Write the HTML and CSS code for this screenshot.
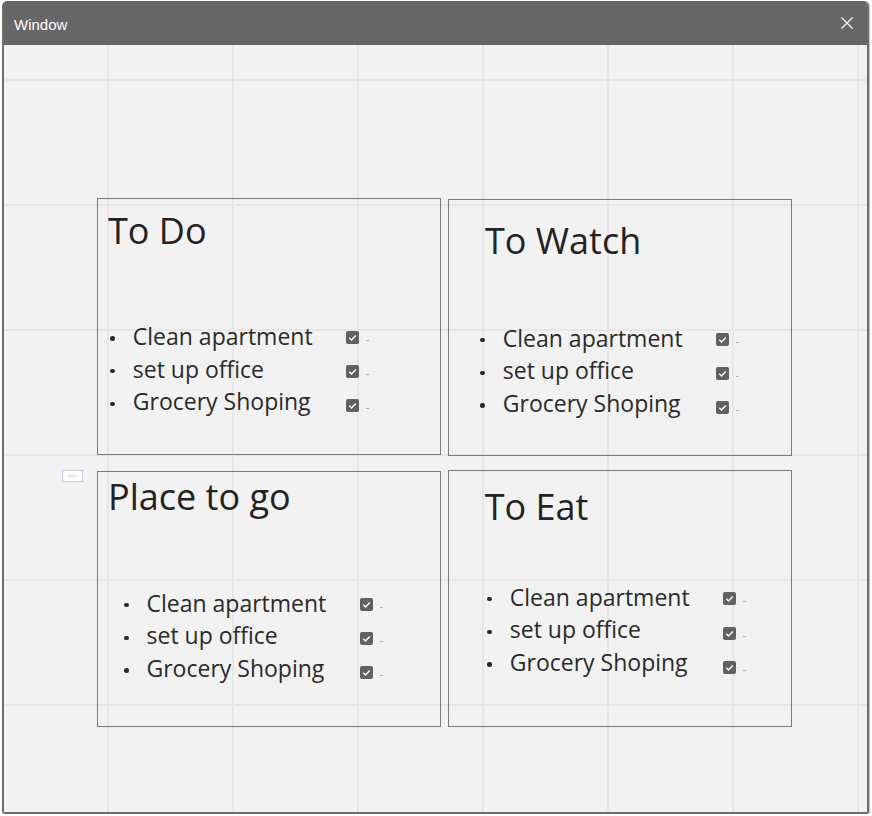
FILE: index.html
```html
<!DOCTYPE html>
<html lang="en">
<head>
<meta charset="utf-8">
<title>Window</title>
<link rel="stylesheet" href="styles.css">
</head>
<body>
<div class="window">
  <div class="titlebar">
    <span class="title">Window</span>
    <svg class="close" width="12" height="12" viewBox="0 0 12 12" aria-hidden="true">
      <path d="M0.5 0.5 L11.5 11.5 M11.5 0.5 L0.5 11.5" stroke="#ffffff" stroke-width="1.2" fill="none"/>
    </svg>
  </div>
  <div class="canvas">
    <div class="tiny-button">Button</div>
    <div class="board">
      <section class="card card-todo">
        <h2 class="card-title">To Do</h2>
        <div class="items">
          <ul class="labels">
            <li class="item"><span class="bullet"></span><span class="label">Clean apartment</span></li>
            <li class="item"><span class="bullet"></span><span class="label">set up office</span></li>
            <li class="item"><span class="bullet"></span><span class="label">Grocery Shoping</span></li>
          </ul>
          <div class="checks">
            <div class="check-row"><span class="check"><svg width="13" height="13" viewBox="0 0 13 13"><path d="M3.3 6.8 L5.5 8.9 L9.8 4.4" stroke="#fff" stroke-width="1.4" fill="none"/></svg></span><span class="dash"></span></div>
            <div class="check-row"><span class="check"><svg width="13" height="13" viewBox="0 0 13 13"><path d="M3.3 6.8 L5.5 8.9 L9.8 4.4" stroke="#fff" stroke-width="1.4" fill="none"/></svg></span><span class="dash"></span></div>
            <div class="check-row"><span class="check"><svg width="13" height="13" viewBox="0 0 13 13"><path d="M3.3 6.8 L5.5 8.9 L9.8 4.4" stroke="#fff" stroke-width="1.4" fill="none"/></svg></span><span class="dash"></span></div>
          </div>
        </div>
      </section>
      <section class="card card-watch">
        <h2 class="card-title">To Watch</h2>
        <div class="items">
          <ul class="labels">
            <li class="item"><span class="bullet"></span><span class="label">Clean apartment</span></li>
            <li class="item"><span class="bullet"></span><span class="label">set up office</span></li>
            <li class="item"><span class="bullet"></span><span class="label">Grocery Shoping</span></li>
          </ul>
          <div class="checks">
            <div class="check-row"><span class="check"><svg width="13" height="13" viewBox="0 0 13 13"><path d="M3.3 6.8 L5.5 8.9 L9.8 4.4" stroke="#fff" stroke-width="1.4" fill="none"/></svg></span><span class="dash"></span></div>
            <div class="check-row"><span class="check"><svg width="13" height="13" viewBox="0 0 13 13"><path d="M3.3 6.8 L5.5 8.9 L9.8 4.4" stroke="#fff" stroke-width="1.4" fill="none"/></svg></span><span class="dash"></span></div>
            <div class="check-row"><span class="check"><svg width="13" height="13" viewBox="0 0 13 13"><path d="M3.3 6.8 L5.5 8.9 L9.8 4.4" stroke="#fff" stroke-width="1.4" fill="none"/></svg></span><span class="dash"></span></div>
          </div>
        </div>
      </section>
      <section class="card card-place">
        <h2 class="card-title">Place to go</h2>
        <div class="items">
          <ul class="labels">
            <li class="item"><span class="bullet"></span><span class="label">Clean apartment</span></li>
            <li class="item"><span class="bullet"></span><span class="label">set up office</span></li>
            <li class="item"><span class="bullet"></span><span class="label">Grocery Shoping</span></li>
          </ul>
          <div class="checks">
            <div class="check-row"><span class="check"><svg width="13" height="13" viewBox="0 0 13 13"><path d="M3.3 6.8 L5.5 8.9 L9.8 4.4" stroke="#fff" stroke-width="1.4" fill="none"/></svg></span><span class="dash"></span></div>
            <div class="check-row"><span class="check"><svg width="13" height="13" viewBox="0 0 13 13"><path d="M3.3 6.8 L5.5 8.9 L9.8 4.4" stroke="#fff" stroke-width="1.4" fill="none"/></svg></span><span class="dash"></span></div>
            <div class="check-row"><span class="check"><svg width="13" height="13" viewBox="0 0 13 13"><path d="M3.3 6.8 L5.5 8.9 L9.8 4.4" stroke="#fff" stroke-width="1.4" fill="none"/></svg></span><span class="dash"></span></div>
          </div>
        </div>
      </section>
      <section class="card card-eat">
        <h2 class="card-title">To Eat</h2>
        <div class="items">
          <ul class="labels">
            <li class="item"><span class="bullet"></span><span class="label">Clean apartment</span></li>
            <li class="item"><span class="bullet"></span><span class="label">set up office</span></li>
            <li class="item"><span class="bullet"></span><span class="label">Grocery Shoping</span></li>
          </ul>
          <div class="checks">
            <div class="check-row"><span class="check"><svg width="13" height="13" viewBox="0 0 13 13"><path d="M3.3 6.8 L5.5 8.9 L9.8 4.4" stroke="#fff" stroke-width="1.4" fill="none"/></svg></span><span class="dash"></span></div>
            <div class="check-row"><span class="check"><svg width="13" height="13" viewBox="0 0 13 13"><path d="M3.3 6.8 L5.5 8.9 L9.8 4.4" stroke="#fff" stroke-width="1.4" fill="none"/></svg></span><span class="dash"></span></div>
            <div class="check-row"><span class="check"><svg width="13" height="13" viewBox="0 0 13 13"><path d="M3.3 6.8 L5.5 8.9 L9.8 4.4" stroke="#fff" stroke-width="1.4" fill="none"/></svg></span><span class="dash"></span></div>
          </div>
        </div>
      </section>
    </div>
  </div>
</div>
</body>
</html>
```

FILE: styles.css
```css
* {
  box-sizing: border-box;
}

html, body {
  margin: 0;
  padding: 0;
  background: #ffffff;
}

body {
  font-family: "Open Sans", "DejaVu Sans", sans-serif;
  color: #222222;
}

.window {
  margin: 1px 0 0 2px;
  width: 867px;
  height: 813px;
  border: 2px solid #6e6e6e;
  border-top: none;
  border-radius: 5px 5px 3px 3px;
  overflow: hidden;
  display: flex;
  flex-direction: column;
  background: #f2f2f2;
  box-shadow: 1px 1px 1px rgba(0, 0, 0, 0.25);
}

.titlebar {
  flex: 0 0 44px;
  margin: 0 -2px;
  background: #666666;
  display: flex;
  align-items: center;
  justify-content: space-between;
  padding: 3px 16px 0 12px;
}

.title {
  font-family: "Liberation Sans", Arial, sans-serif;
  font-size: 15px;
  color: #ffffff;
}

.close {
  display: block;
  margin-top: -3px;
}

.canvas {
  position: relative;
  flex: 1 1 auto;
  padding: 153px 0 0 93px;
  background-color: #f2f2f2;
  background-image:
    linear-gradient(to right, #e6e6e6 0, #e6e6e6 2px, transparent 2px),
    linear-gradient(to bottom, #e6e6e6 0, #e6e6e6 2px, transparent 2px);
  background-size: 125px 125px;
  background-position: 103px 34px;
}

.tiny-button {
  position: absolute;
  left: 58px;
  top: 425px;
  width: 21px;
  height: 12px;
  border: 1px solid #c9c9ef;
  background: #ffffff;
  font-family: "Liberation Sans", Arial, sans-serif;
  font-size: 3px;
  line-height: 10px;
  text-align: center;
  color: #b8b8e0;
}

.board {
  display: grid;
  grid-template-columns: 344px 344px;
  grid-template-rows: 257px 256px;
  column-gap: 7px;
  row-gap: 16px;
}

.card {
  border: 1px solid #7a7a7a;
  display: flex;
  flex-direction: column;
}

.card-title {
  margin: 0;
  font-size: 36px;
  font-weight: 400;
  line-height: 44px;
  color: #222222;
}

.items {
  display: flex;
  align-items: flex-start;
}

.labels {
  list-style: none;
  margin: 0;
  padding: 0;
  flex: 0 0 235.5px;
}

.item {
  display: flex;
  align-items: center;
  height: 32.7px;
  font-size: 23px;
  color: #2a2a2a;
}

.bullet {
  flex: 0 0 22.5px;
  display: flex;
  align-items: center;
  padding-top: 5px;
}

.bullet::before {
  content: "";
  width: 4.5px;
  height: 4.5px;
  border-radius: 50%;
  background: #2a2a2a;
}

.label {
  white-space: nowrap;
}

.checks {
  margin-top: 1px;
  display: flex;
  flex-direction: column;
}

.check-row {
  height: 34px;
  display: flex;
  align-items: center;
}

.check {
  flex: 0 0 13px;
  height: 13px;
  background: #616161;
  border-radius: 2px;
  display: flex;
}

.dash {
  width: 3px;
  height: 1px;
  margin: 6px 0 0 7px;
  background: #b0b0b0;
}

/* per-card placement */
.card-todo .card-title {
  margin: 10px 0 0 10px;
}
.card-todo .items {
  margin-top: 66.7px;
  padding-left: 12.3px;
}

.card-watch {
  margin-top: 1px;
  margin-bottom: -1px;
}
.card-watch .card-title {
  margin: 19px 0 0 36px;
}
.card-watch .items {
  margin-top: 58.4px;
  padding-left: 31.3px;
}
.card-watch .checks {
  margin-top: 1.6px;
}

.card-place .card-title {
  margin: 3px 0 0 10px;
}
.card-place .items {
  margin-top: 67.4px;
  padding-left: 26px;
}

.card-eat {
  margin-top: -1px;
}
.card-eat .card-title {
  margin: 14px 0 0 35.7px;
}
.card-eat .items {
  margin-top: 51.4px;
  padding-left: 38.3px;
}
.card-eat .check-row {
  height: 34.5px;
}
```
